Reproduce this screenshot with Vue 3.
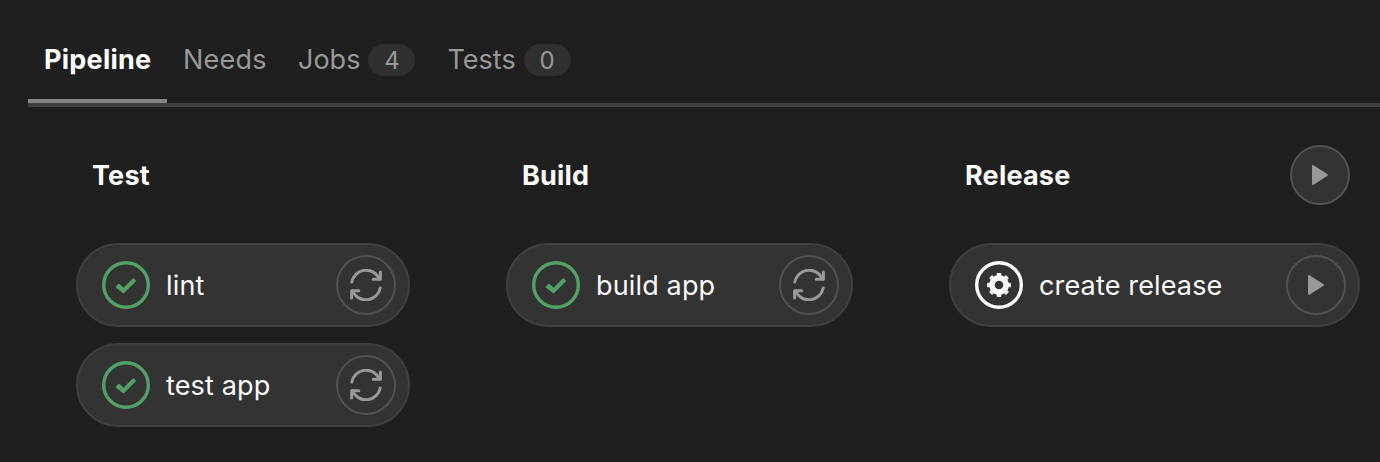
<script setup>
const tabs = [
  { key: 'pipeline', label: 'Pipeline', active: true },
  { key: 'needs', label: 'Needs' },
  { key: 'jobs', label: 'Jobs', count: 4 },
  { key: 'tests', label: 'Tests', count: 0 },
]

const stages = [
  {
    key: 'test',
    name: 'Test',
    jobs: [
      { key: 'lint', name: 'lint', status: 'success', action: 'retry' },
      { key: 'test-app', name: 'test app', status: 'success', action: 'retry' },
    ],
  },
  {
    key: 'build',
    name: 'Build',
    jobs: [{ key: 'build-app', name: 'build app', status: 'success', action: 'retry' }],
  },
  {
    key: 'release',
    name: 'Release',
    playable: true,
    jobs: [{ key: 'create-release', name: 'create release', status: 'manual', action: 'play' }],
  },
]

const teeth = [0, 45, 90, 135]
</script>

<template>
  <main class="page">
    <nav class="tabs">
      <a v-for="tab in tabs" :key="tab.key" class="tab" :class="[tab.key, { active: tab.active }]">
        <span class="tab-label">{{ tab.label }}</span>
        <span v-if="tab.count !== undefined" class="badge">{{ tab.count }}</span>
      </a>
    </nav>

    <div class="graph">
      <section v-for="stage in stages" :key="stage.key" class="stage" :class="stage.key">
        <header class="stage-head">
          <h2>{{ stage.name }}</h2>
          <button v-if="stage.playable" class="action">
            <svg width="32" height="32" viewBox="0 0 32 32">
              <path class="play" d="M9 7v18l14-9z" />
            </svg>
          </button>
        </header>
        <div v-for="job in stage.jobs" :key="job.key" class="job" :class="job.key">
          <svg v-if="job.status === 'success'" class="status success" width="48" height="48" viewBox="0 0 48 48">
            <circle cx="24" cy="24" r="22.3" stroke-width="3.4" />
            <path
              class="check"
              d="M14 25.3L16.3 23Q17 22.4 17.7 23L21.5 26.8L30.7 17.6Q31.4 17 32.1 17.6L33.7 19.2Q34.3 19.9 33.7 20.6L22.2 32Q21.5 32.6 20.8 32L14 26.7Q13.4 26 14 25.3Z"
            />
          </svg>
          <svg v-else class="status manual" width="48" height="48" viewBox="0 0 48 48">
            <circle cx="24" cy="24" r="22.3" stroke-width="3.4" />
            <circle cx="24" cy="24" r="7.1" stroke-width="5.6" />
            <g v-for="angle in teeth" :key="angle" :transform="`rotate(${angle} 24 24)`">
              <path d="M24 13.8v4.4M24 29.8v4.4" stroke-width="4.6" />
              <path d="M22.6 13h2.8M22.6 35h2.8" stroke-width="1.8" stroke-linecap="round" />
            </g>
          </svg>
          <span class="job-name">{{ job.name }}</span>
          <button class="action">
            <svg v-if="job.action === 'retry'" class="retry" width="32" height="32" viewBox="0 0 32 32">
              <path d="M1.8 13.1A14.5 14.5 0 0 1 29.4 10" />
              <path d="M30.4 3.1v7.2h-7.2" />
              <path d="M30.2 18.9A14.5 14.5 0 0 1 2.6 22" />
              <path d="M1.6 28.9v-7.2h7.2" />
            </svg>
            <svg v-else width="32" height="32" viewBox="0 0 32 32">
              <path class="play" d="M9 7v18l14-9z" />
            </svg>
          </button>
        </div>
      </section>
    </div>
  </main>
</template>

<style>
html,
body {
  margin: 0;
  background: #1f1f1f;
}
</style>

<style scoped>
.page {
  box-sizing: border-box;
  height: 462px;
  overflow: hidden;
  background: #1f1f1f;
  color: #fafafa;
  font-family: Inter, "Liberation Sans", sans-serif;
  font-size: 27px;
  line-height: 40px;
}
.tabs {
  box-sizing: border-box;
  display: flex;
  height: 107px;
  margin-left: 28px;
  padding-top: 20px;
  border-bottom: 4px solid #404040;
}
.tab {
  box-sizing: border-box;
  display: flex;
  align-items: center;
  height: 83px;
  padding: 0 16px 4px;
  gap: 8px;
  color: #999;
  white-space: nowrap;
}
.tab.active {
  padding-bottom: 0;
  border-bottom: 4px solid #868686;
  color: #fff;
  font-weight: 700;
  letter-spacing: 0.25px;
}
.tab.pipeline { width: 139px; }
.tab.needs { width: 115px; letter-spacing: 0.2px; }
.tab.jobs { width: 149.5px; }
.badge {
  width: 47px;
  height: 32px;
  margin-top: 1px;
  border-radius: 16px;
  background: #303030;
  font-size: 24px;
  line-height: 33px;
  text-align: center;
}
.graph {
  display: flex;
  align-items: flex-start;
  gap: 96px;
  padding: 38px 0 0 76px;
}
.stage {
  display: flex;
  flex: none;
  flex-direction: column;
  gap: 16px;
}
.stage.test { width: 334px; }
.stage.build { width: 347px; }
.stage.release { width: 411px; }
.stage-head {
  box-sizing: border-box;
  display: flex;
  align-items: center;
  justify-content: space-between;
  height: 60px;
  margin-bottom: 22px;
  padding: 0 10px 0 16px;
}
h2 {
  margin: 0;
  padding-top: 2px;
  font-size: 27px;
  font-weight: 700;
  letter-spacing: 0.2px;
}
.job {
  box-sizing: border-box;
  display: flex;
  align-items: center;
  height: 84px;
  padding: 0 12px 0 24px;
  border: 2px solid #404040;
  border-radius: 42px;
  background: #333;
}
.status {
  flex: none;
  margin-right: 16px;
  fill: none;
}
.success { stroke: #52a167; }
.check {
  fill: #52a167;
  stroke: none;
}
.manual { stroke: #fafafa; }
.job-name {
  padding-top: 2px;
  letter-spacing: 0.15px;
  white-space: nowrap;
}
.action {
  box-sizing: border-box;
  display: flex;
  flex: none;
  align-items: center;
  justify-content: center;
  width: 60px;
  height: 60px;
  margin: 0;
  padding: 0;
  border: 2px solid #525252;
  border-radius: 50%;
  background: #333;
}
.job .action { margin-left: auto; }
.retry {
  fill: none;
  stroke: #999;
  stroke-width: 3;
  stroke-linecap: round;
  stroke-linejoin: round;
}
.play {
  fill: #999;
  stroke: #999;
  stroke-width: 2;
  stroke-linejoin: round;
}
</style>
